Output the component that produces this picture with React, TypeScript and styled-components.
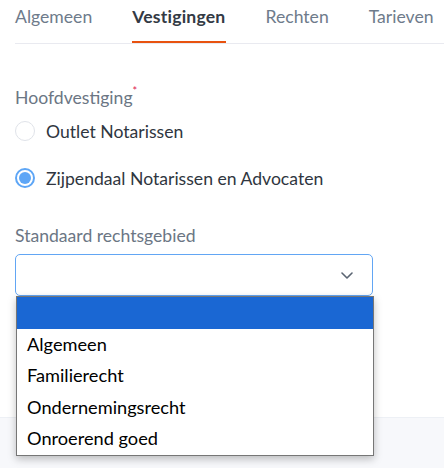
import styled, { createGlobalStyle } from 'styled-components';

const GlobalStyle = createGlobalStyle`
  html, body {
    margin: 0;
    padding: 0;
    background: #ffffff;
  }
  body {
    font-family: Lato, "Open Sans", sans-serif;
  }
`;

const Page = styled.div`
  width: 444px;
  height: 468px;
  display: flex;
  flex-direction: column;
  overflow: hidden;
`;

const TabBar = styled.div`
  display: flex;
  gap: 40px;
  margin-left: 15px;
  border-bottom: 1px solid #e9eaf0;
`;

interface TabProps {
  active?: boolean;
}

const Tab = styled.div<TabProps>`
  height: 43px;
  padding-top: 6px;
  box-sizing: border-box;
  font-size: 17.6px;
  line-height: 22px;
  white-space: nowrap;
  color: ${(p) => (p.active ? '#333a44' : '#6e7b8b')};
  font-weight: ${(p) => (p.active ? 700 : 400)};
  letter-spacing: ${(p) => (p.active ? '0.2px' : '0')};
  border-bottom: 2px solid ${(p) => (p.active ? '#e8520f' : 'transparent')};
`;

const Content = styled.div`
  flex: 1;
  padding: 44px 15px 0;
`;

const Label = styled.div`
  font-size: 17.6px;
  line-height: 20px;
  color: #6b7684;
`;

const Required = styled.sup`
  color: #e0204f;
  font-size: 11px;
  line-height: 0;
  position: relative;
  top: -2px;
`;

const RadioGroup = styled.div`
  display: flex;
  flex-direction: column;
  gap: 17px;
  margin-top: 8px;
`;

const RadioRow = styled.label`
  display: flex;
  align-items: center;
  gap: 11px;
  height: 30px;
  font-size: 17.6px;
  color: #2f3640;
`;

interface RadioProps {
  checked?: boolean;
}

const RadioCircle = styled.span<RadioProps>`
  width: 20px;
  height: 20px;
  box-sizing: border-box;
  border-radius: 50%;
  border: ${(p) => (p.checked ? '2px solid #5ea6f6' : '1px solid #e0e3e9')};
  display: flex;
  align-items: center;
  justify-content: center;
  &::after {
    content: '';
    width: 12px;
    height: 12px;
    border-radius: 50%;
    background: ${(p) => (p.checked ? '#5ea6f6' : 'transparent')};
  }
`;

const Field = styled.div`
  margin-top: 33px;
`;

const SelectWrap = styled.div`
  position: relative;
  margin-top: 8px;
  width: 358px;
`;

const SelectBox = styled.div`
  height: 42px;
  box-sizing: border-box;
  border: 1px solid #62a6f4;
  border-radius: 5px;
  display: flex;
  align-items: center;
  justify-content: flex-end;
  padding-right: 19px;
  background: #fff;
`;

const Menu = styled.ul`
  position: absolute;
  top: 100%;
  left: 1px;
  width: 358px;
  margin: 0;
  padding: 0;
  list-style: none;
  background: #fff;
  border: 1px solid #767676;
  box-sizing: border-box;
  box-shadow: 0 3px 8px rgba(0, 0, 0, 0.25);
  z-index: 10;
`;

interface OptionProps {
  selected?: boolean;
}

const Option = styled.li<OptionProps>`
  height: 31.6px;
  line-height: 31.6px;
  padding-left: 10px;
  font-size: 18.2px;
  color: #000;
  background: ${(p) => (p.selected ? '#1a67d3' : '#fff')};
`;

const Footer = styled.div`
  height: 50px;
  background: #f7f8fb;
  border-top: 1px solid #edf0f5;
`;

const Chevron = () => (
  <svg width="12" height="7" viewBox="0 0 12 7" fill="none">
    <path d="M1 1l5 5 5-5" stroke="#5b6573" strokeWidth="1.6" strokeLinecap="round" strokeLinejoin="round" />
  </svg>
);

const tabs = ['Algemeen', 'Vestigingen', 'Rechten', 'Tarieven'];
const options = ['', 'Algemeen', 'Familierecht', 'Ondernemingsrecht', 'Onroerend goed'];

export default function App() {
  return (
    <>
      <GlobalStyle />
      <Page>
        <TabBar>
          {tabs.map((t) => (
            <Tab key={t} active={t === 'Vestigingen'}>
              {t}
            </Tab>
          ))}
        </TabBar>
        <Content>
          <Label>
            Hoofdvestiging<Required>*</Required>
          </Label>
          <RadioGroup>
            <RadioRow>
              <RadioCircle />
              Outlet Notarissen
            </RadioRow>
            <RadioRow>
              <RadioCircle checked />
              Zijpendaal Notarissen en Advocaten
            </RadioRow>
          </RadioGroup>
          <Field>
            <Label>Standaard rechtsgebied</Label>
            <SelectWrap>
              <SelectBox>
                <Chevron />
              </SelectBox>
              <Menu>
                {options.map((o, i) => (
                  <Option key={i} selected={i === 0}>
                    {o}
                  </Option>
                ))}
              </Menu>
            </SelectWrap>
          </Field>
        </Content>
        <Footer />
      </Page>
    </>
  );
}
